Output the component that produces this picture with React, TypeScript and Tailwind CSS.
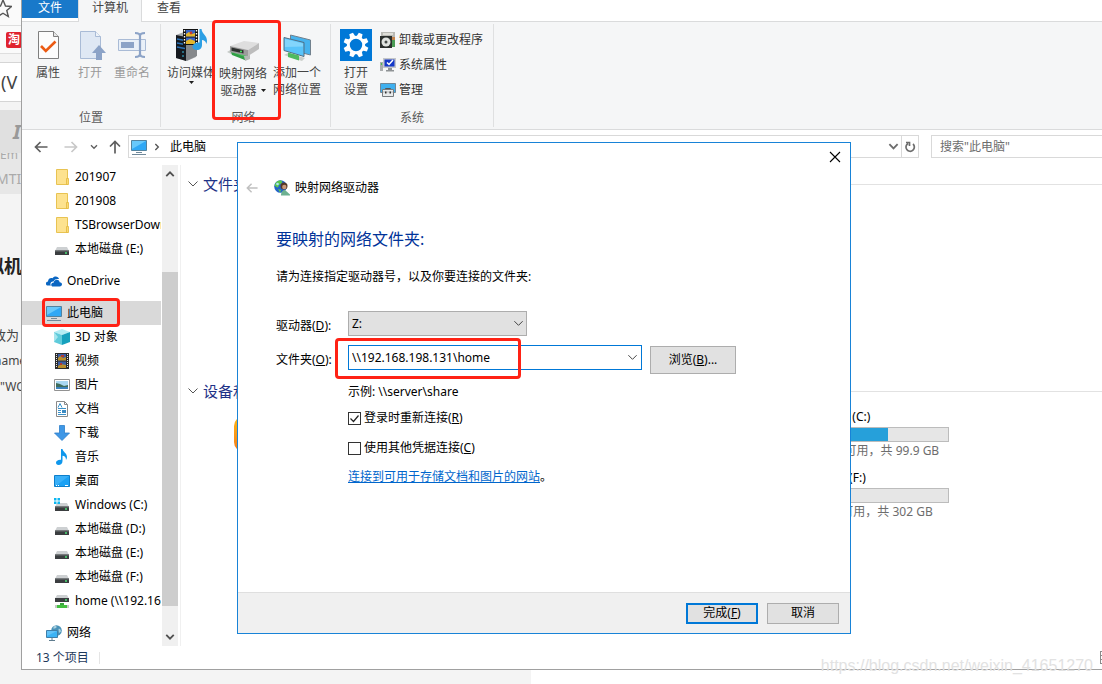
import type { ReactNode } from 'react'

// ---------- small glyphs ----------

function Chevron({ className = '', width = 1 }: { className?: string; width?: number }) {
  return (
    <svg viewBox="0 0 12 12" fill="none" stroke="currentColor" strokeWidth={width} className={className} aria-hidden>
      <path d="M1.5 3.5 6 8l4.5-4.5" />
    </svg>
  )
}

function Arrow({ className = '' }: { className?: string }) {
  return (
    <svg viewBox="0 0 14 14" fill="none" stroke="currentColor" strokeWidth="1.7" className={className} aria-hidden>
      <path d="M13.5 7H1.5M6.5 2 1.5 7l5 5" />
    </svg>
  )
}

function Caret() {
  return (
    <svg viewBox="0 0 5 3" className="h-[3px] w-[5px] fill-[#1e1e1e]" aria-hidden>
      <path d="M0 0h5L2.5 3z" />
    </svg>
  )
}

// ---------- ribbon icons ----------

function PropertiesIcon() {
  return (
    <svg viewBox="0 0 32 32" className="size-8" aria-hidden>
      <path d="M6.500 2.500h15l5 5v22h-20z" fill="#fcfcfc" stroke="#7f7f7f" />
      <path d="M21.5 2.5v5h5" fill="#e6e6e6" stroke="#7f7f7f" />
      <path d="m9 17 4.800 5L23.500 12.500" fill="none" stroke="#eb5a12" strokeWidth="2.600" />
    </svg>
  )
}

function OpenIcon() {
  return (
    <svg viewBox="0 0 32 32" className="size-8" aria-hidden>
      <path d="M6.500 2.500h15l5 5v22h-20z" fill="#dfe8f4" stroke="#a9bbd6" />
      <path d="M21.5 2.5v5h5" fill="#eef3f9" stroke="#a9bbd6" />
      <path d="m25 16 7 8h-4v7h-6v-7h-4z" fill="#8ca3c7" />
    </svg>
  )
}

function RenameIcon() {
  return (
    <svg viewBox="0 0 32 32" className="size-8" aria-hidden>
      <path d="M2.500 10.500h27v11h-27z" fill="#e9f0f8" stroke="#a9bbd6" />
      <path d="M5 13h13v6H5z" fill="#8ca3c7" />
      <path d="M19 4c3 0 5 .8 5 3v18c0 2.200-2 3-5 3M29 4c-3 0-5 .8-5 3v18c0 2.200 2 3 5 3" fill="none" stroke="#8ca3c7" strokeWidth="2.200" />
    </svg>
  )
}

function MediaIcon() {
  return (
    <svg viewBox="0 0 32 32" className="size-8" aria-hidden>
      <path d="m1 6 8-3 12 2v23l-9 4-11-3z" fill="#a5a8ab" />
      <path d="m1 6 10 2v24L1 29z" fill="#15191e" />
      <path d="m11 8 11-3v22l-11 5z" fill="#85888b" />
      <path d="m2 10 8 1.500M2 14l8 1.500M2 18l8 1.500" stroke="#2a72b8" strokeWidth="1.300" />
      <circle cx="8" cy="23" r=".8" fill="#43d6ff" />
      <circle cx="8" cy="27" r=".8" fill="#43d6ff" />
      <path d="M8 0h15v16H8z" fill="#111" />
      <path d="M11 1h9v6.500h-9zM11 8.500h9v6.500h-9z" fill="#3a64c4" />
      <path d="m11 5 3-2 3 2 3-1v3.500h-9zM11 12l4-2 5 2v3h-9z" fill="#e3b62b" />
      <circle cx="16" cy="4" r="1.400" fill="#c93a2b" />
      <path d="M9.500 1v14M21.500 1v14" stroke="#fff" strokeWidth="1.400" strokeDasharray="1.500 1.500" />
      <path d="M24.500 0h2c.5 5 5.500 6 5.500 12 0 1-.2 2-.8 3-.3-3-2.200-4-4.200-4v5c0 3-2 5-5 5s-4.500-1.500-4.500-3.500 3-4.500 7-4z" fill="#2d9fe4" />
    </svg>
  )
}

function MapDriveIcon() {
  return (
    <svg viewBox="0 0 32 32" className="size-8" aria-hidden>
      <path d="m0 22 5-3 6 2-5 4z" fill="#c5cac7" />
      <path d="m4 22 5-2 12 5-3 5z" fill="#51bd63" />
      <path d="m4 22 14 5v3L5 25z" fill="#2f9f45" />
      <path d="m17 26 6-1v4l-5 2z" fill="#b4b9b6" />
      <path d="M3 16 17 11l15 2-11 7z" fill="#dedede" />
      <path d="m3 16 18 4v6L3 22z" fill="#9c9c9c" />
      <path d="m21 20 11-7v6l-11 7z" fill="#bdbdbd" />
      <path d="m4.500 17.500 12 2.700v3.300l-12-2.800z" fill="#2e3230" />
      <circle cx="14" cy="21.500" r="1" fill="#49ef63" />
    </svg>
  )
}

function AddLocationIcon() {
  return (
    <svg viewBox="0 0 32 32" className="size-8" aria-hidden>
      <path d="m9.500 6 20 5v15l-20-5z" fill="#47b3ee" stroke="#71818e" />
      <path d="m3 8.500 20 5v14l-20-6z" fill="#59c4fa" stroke="#526e82" />
      <path d="m4 10 18 4.500v3L4 18z" fill="#82d5fc" />
      <path d="m3 26 4-2 17 5-3 3z" fill="#c9ceca" />
      <path d="m7 23.500 11 3v5L7 28z" fill="#4fba60" />
    </svg>
  )
}

function GearTile() {
  return (
    <svg viewBox="0 0 32 32" className="size-8" aria-hidden>
      <path d="M0 0h32v32H0z" fill="#0078d7" />
      <circle cx="16" cy="16" r="7.700" fill="none" stroke="#fff" strokeWidth="3" />
      {[22, 67, 112, 157, 202, 247, 292, 337].map((deg) => (
        <path key={deg} d="M14 3.500h4l.8 4.500h-5.600z" fill="#fff" transform={`rotate(${deg} 16 16)`} />
      ))}
    </svg>
  )
}

function UninstallIcon() {
  return (
    <svg viewBox="0 0 16 16" className="size-4" aria-hidden>
      <path d="M1 0h14v5H1z" fill="#b9b9b4" />
      <path d="M3 1h10v2H3z" fill="#deded8" />
      <path d="M11 5h4v10h-4z" fill="#c4834d" />
      <path d="M12 8h3v7h-3z" fill="#4b9c56" />
      <path d="M0 4h12v12H0z" fill="#2b2f2d" />
      <circle cx="6" cy="10" r="4.500" fill="#e0e3e0" />
      <circle cx="6" cy="10" r="1.500" fill="#454a48" />
    </svg>
  )
}

function SystemIcon() {
  return (
    <svg viewBox="0 0 16 16" className="size-4" aria-hidden>
      <path d="M0 5h3v9H0z" fill="#a9acae" />
      <path d="M1 6h1v2H1z" fill="#49bf4b" />
      <path d="M3 1h13v10H3z" fill="#c3c6ca" />
      <path d="M4.500 2.500h10v7h-10z" fill="#1438c8" />
      <path d="m7 5.500 2 2L13 3" fill="none" stroke="#fff" strokeWidth="1.500" />
      <path d="M8 11h4v2h2v1.500H6V13h2z" fill="#8f9396" />
    </svg>
  )
}

function ManageIcon() {
  return (
    <svg viewBox="0 0 16 16" className="size-4" aria-hidden>
      <path d="M.5 1.500h15v9H.5z" fill="#3fb0ef" stroke="#6f8798" />
      <path d="M5.500 7.500v-1h5v1" fill="none" stroke="#555" />
      <path d="M2.500 7.500h11v7h-11z" fill="#e9ebec" stroke="#777b7e" />
      <path d="M3 10h10" stroke="#b4b7b9" />
      <path d="M5 9.500h1.500v2H5zM9.500 9.500H11v2H9.500z" fill="#333" />
    </svg>
  )
}

// ---------- tree icons ----------

function FolderIcon() {
  return (
    <svg viewBox="0 0 16 16" className="size-4" aria-hidden>
      <path d="M2.500.5h11v15h-11z" fill="#fde28f" stroke="#e8c352" />
      <path d="M12.500 9.500h2v6h-2z" fill="#fbd974" stroke="#e2b93e" strokeWidth=".8" />
    </svg>
  )
}

function DriveIcon({ children }: { children?: ReactNode }) {
  return (
    <svg viewBox="0 0 16 16" className="size-4" aria-hidden>
      <path d="M3 6h10l2 4H1z" fill="#cdd0d2" />
      <path d="M1 9.500h14V14H1z" fill="#3b3e40" />
      <path d="M1 9.500h14v1H1z" fill="#6b6e70" />
      <circle cx="12" cy="12" r=".9" fill="#4df07c" />
      {children}
    </svg>
  )
}

function WindowsDriveIcon() {
  return (
    <DriveIcon>
      <path d="M0 1h2.500v2.500H0zM3.500 1H6v2.500H3.500zM0 4.500h2.500V7H0zM3.500 4.500H6V7H3.500z" fill="#0cb6f0" />
    </DriveIcon>
  )
}

function NetDriveIcon() {
  return (
    <svg viewBox="0 0 16 16" className="size-4" aria-hidden>
      <path d="M3 2h10l2 3.500H1z" fill="#cdd0d2" />
      <path d="M1 5h14v4H1z" fill="#3b3e40" />
      <circle cx="12" cy="7" r=".9" fill="#4df07c" />
      <path d="M6 10h4v2H6z" fill="#3aa53c" />
      <path d="M3 12h10v3H3z" fill="#43bf3f" />
      <path d="M1 12h2v3H1zM13 12h2v3h-2z" fill="#c4c8c4" />
    </svg>
  )
}

function OneDriveIcon() {
  return (
    <svg viewBox="0 0 16 16" className="size-4" aria-hidden>
      <path d="M2 12.500C-1 12.500-.5 8.500 2 8.500c0-3 3-4 4.500-3.200C8 2.500 12.500 3 13 6 9.500 5.500 8 7 7.500 8.500 5 8 3.500 11 5 12.500z" fill="#0a66c2" />
      <path d="M7 13.500c-2.500 0-2.500-4 .8-4 .2-3.500 5.400-3.500 5.800-.3 3.200 0 3.200 4.300 0 4.300z" fill="#0a66c2" />
    </svg>
  )
}

function PcIcon() {
  return (
    <svg viewBox="0 0 16 16" className="size-4" aria-hidden>
      <path d="M.5 1.500h15v10H.5z" fill="#30a8f5" stroke="#53839f" />
      <path d="M1 2h14L1 10z" fill="#68c9fb" />
      <path d="M5 13.500h6M1 15.500h14" stroke="#71899a" />
    </svg>
  )
}

function CubeIcon() {
  return (
    <svg viewBox="0 0 16 16" className="size-4" aria-hidden>
      <path d="m8 0 8 3-8 3-8-3z" fill="#b4edf4" />
      <path d="m0 3 8 3v10l-8-3z" fill="#5fcbdb" />
      <path d="m16 3-8 3v10l8-3z" fill="#16a1bd" />
      <path d="m0 3 4 5-4 5z" fill="#a5e5ed" />
    </svg>
  )
}

function VideoIcon() {
  return (
    <svg viewBox="0 0 16 16" className="size-4" aria-hidden>
      <path d="M1 0h14v16H1z" fill="#2c2c2c" />
      <path d="M2.500 1v14M13.500 1v14" stroke="#e8e8e8" strokeDasharray="1 1" />
      <path d="M4 1h8v6.500H4zM4 8.500h8V15H4z" fill="#3d5ea5" />
      <path d="m4 5 2-2 3 2 3-1v3.500H4zM4 13l3-2 5 1v3H4z" fill="#b98f2c" />
      <path d="M7 2h3v2H7zM6 10h2v2H6z" fill="#b53a2e" />
    </svg>
  )
}

function PictureIcon() {
  return (
    <svg viewBox="0 0 16 16" className="size-4" aria-hidden>
      <path d="M.5 2.500h15v11H.5z" fill="#fff" stroke="#929292" />
      <path d="M2 4h12v8H2z" fill="#a9d8f2" />
      <path d="m2 6 4 1 4 2 4-1v2H2z" fill="#3f6d5c" />
      <path d="M2 10h12v2H2z" fill="#3c83bd" />
    </svg>
  )
}

function DocIcon() {
  return (
    <svg viewBox="0 0 16 16" className="size-4" aria-hidden>
      <path d="M2.500.5h8l3 3v12h-11z" fill="#fff" stroke="#8a8a8a" />
      <path d="M10.500.5v3h3" fill="none" stroke="#8a8a8a" />
      <path d="m4 6.500 2-4 2 4M4 7.500h8M4 9.500h3M4 11.500h3M4 13.500h8" fill="none" stroke="#3a91c9" />
      <path d="M8 9h4v3H8z" fill="#3b8ac2" />
    </svg>
  )
}

function DownloadIcon() {
  return (
    <svg viewBox="0 0 16 16" className="size-4" aria-hidden>
      <path d="M5.500.5h5V8h5L8 15.500.5 8h5z" fill="#3f97e6" stroke="#2d7fc9" strokeWidth=".8" />
    </svg>
  )
}

function MusicIcon() {
  return (
    <svg viewBox="0 0 16 16" className="size-4" aria-hidden>
      <path d="M7 0h1.500c.5 3 4.500 4 4.500 8 0 1-.3 2-1 3 0-3-1.500-4-3.500-4.200V12c0 2.500-1.700 4-4 4-1.700 0-2.500-1-2.500-2.200C2 12 4 10.500 7 10.800z" fill="#0f97ec" />
    </svg>
  )
}

function DesktopIcon() {
  return (
    <svg viewBox="0 0 16 16" className="size-4" aria-hidden>
      <path d="M.5 2.500h15v11H.5z" fill="#1ba1f4" stroke="#0e7fcb" />
      <path d="M1 3h14L3 12H1z" fill="#3ab0f8" />
      <path d="M2 12.500h1M4 12.500h1M11 12.500h3" stroke="#fff" />
    </svg>
  )
}

function NetworkIcon() {
  return (
    <svg viewBox="0 0 16 16" className="size-4" aria-hidden>
      <circle cx="10.500" cy="5.500" r="5.300" fill="#4a92b8" />
      <path d="M8 1.500c2-1 3 0 2.500 1S8 3.500 7 3.500zM12.500 4c1.500-1 2.500 1 2.500 2.500l-2 1.500z" fill="#a9d0de" />
      <path d="M.5 5.500h11v7H.5z" fill="#3cb3f5" stroke="#3f7ea8" />
      <path d="M1 6h10L1 11z" fill="#62c2f8" />
      <path d="M3 15.500h6M6 13v2" stroke="#5f7c8e" />
    </svg>
  )
}

function GlobeUserIcon() {
  return (
    <svg viewBox="0 0 16 16" className="size-4" aria-hidden>
      <circle cx="6.500" cy="6.500" r="6.300" fill="#2464c8" />
      <path d="M2 2.500C5-.5 9 .5 8 2.500S5 4 4.500 6.500 1.500 6 .4 5.500zM4 9l3 1-1 2.500z" fill="#5cc84b" />
      <circle cx="3.500" cy="4" r="1.300" fill="#aee7f5" />
      <circle cx="10" cy="6" r="3.500" fill="#553827" />
      <circle cx="10.300" cy="7" r="2.200" fill="#c9987a" />
      <path d="M7 15.500c0-4 2-5.500 4-5.500l5 4.500v1z" fill="#6db191" />
    </svg>
  )
}

// ---------- data ----------

type TreeItem = { label: string; icon: ReactNode; top?: boolean; active?: boolean }

const treeGroups: TreeItem[][] = [
  [
    { label: '201907', icon: <FolderIcon /> },
    { label: '201908', icon: <FolderIcon /> },
    { label: 'TSBrowserDownload', icon: <FolderIcon /> },
    { label: '本地磁盘 (E:)', icon: <DriveIcon /> },
  ],
  [{ label: 'OneDrive', icon: <OneDriveIcon />, top: true }],
  [
    { label: '此电脑', icon: <PcIcon />, top: true, active: true },
    { label: '3D 对象', icon: <CubeIcon /> },
    { label: '视频', icon: <VideoIcon /> },
    { label: '图片', icon: <PictureIcon /> },
    { label: '文档', icon: <DocIcon /> },
    { label: '下载', icon: <DownloadIcon /> },
    { label: '音乐', icon: <MusicIcon /> },
    { label: '桌面', icon: <DesktopIcon /> },
    { label: 'Windows (C:)', icon: <WindowsDriveIcon /> },
    { label: '本地磁盘 (D:)', icon: <DriveIcon /> },
    { label: '本地磁盘 (E:)', icon: <DriveIcon /> },
    { label: '本地磁盘 (F:)', icon: <DriveIcon /> },
    { label: 'home (\\\\192.168.198.131)', icon: <NetDriveIcon /> },
  ],
  [{ label: '网络', icon: <NetworkIcon />, top: true }],
]

const drives = [
  { name: 'Windows (C:)', used: 60, info: '39.8 GB 可用，共 99.9 GB' },
  { name: '本地磁盘 (F:)', used: 0, info: '301 GB 可用，共 302 GB' },
]

// ---------- explorer ----------

function BigButton({ icon, lines, caret, disabled, className = '' }: {
  icon: ReactNode
  lines: string[]
  caret?: boolean
  disabled?: boolean
  className?: string
}) {
  return (
    <button disabled={disabled} className={`flex shrink-0 flex-col items-center text-[#444] disabled:text-[#9a9a9a] ${className}`}>
      {icon}
      <span className="mt-[3px] flex flex-col items-center leading-[17px] whitespace-nowrap">
        {lines.map((line, i) => (
          <span key={line} className="flex items-center gap-1">
            {line}
            {caret && i > 0 && <Caret />}
          </span>
        ))}
        {caret && lines.length === 1 && <Caret />}
      </span>
    </button>
  )
}

function RibbonGroup({ title, className, children }: { title: string; className: string; children: ReactNode }) {
  return (
    <section className={`my-0.5 flex shrink-0 flex-col justify-between border-r border-[#dfe0e1] ${className}`}>
      <div className="flex items-start">{children}</div>
      <h2 className="pb-px text-center leading-4 text-[#5a5a5a]">{title}</h2>
    </section>
  )
}

function Ribbon() {
  return (
    <div className="flex h-[108px] shrink-0 border-b border-[#dadbdc] bg-[#f5f6f7]">
      <RibbonGroup title="位置" className="w-[139px]">
        <BigButton icon={<PropertiesIcon />} lines={['属性']} className="mt-[5px] ml-[10px] w-8" />
        <BigButton icon={<OpenIcon />} lines={['打开']} disabled className="mt-[5px] ml-[10px] w-8" />
        <BigButton icon={<RenameIcon />} lines={['重命名']} disabled className="mt-[5px] ml-2 w-9" />
      </RibbonGroup>
      <RibbonGroup title="网络" className="w-[170px] pr-1">
        <BigButton icon={<MediaIcon />} lines={['访问媒体']} caret className="mt-[5px] ml-[6px] w-12" />
        <BigButton icon={<MapDriveIcon />} lines={['映射网络', '驱动器']} caret className="mt-[6px] ml-1 w-12" />
        <BigButton icon={<AddLocationIcon />} lines={['添加一个', '网络位置']} className="mt-[5px] ml-[6px] w-12" />
      </RibbonGroup>
      <RibbonGroup title="系统" className="w-[163px]">
        <BigButton icon={<GearTile />} lines={['打开', '设置']} className="mt-[5px] ml-[9px] w-8" />
        <div className="mt-[3px] ml-2 flex flex-col text-[#333]">
          <button className="flex h-[25px] items-center gap-[3px] whitespace-nowrap"><UninstallIcon />卸载或更改程序</button>
          <button className="flex h-[25px] items-center gap-[3px]"><SystemIcon />系统属性</button>
          <button className="flex h-[25px] items-center gap-[3px]"><ManageIcon />管理</button>
        </div>
      </RibbonGroup>
    </div>
  )
}

function AddressBar() {
  return (
    <div className="flex h-[35px] shrink-0 items-start pt-[5px]">
      <div className="flex h-[23px] w-[106px] shrink-0 items-center pl-3 text-[#5f5f5f]">
        <button aria-label="后退"><Arrow className="size-3.5" /></button>
        <button aria-label="前进" className="ml-4 text-[#c8c8c8]"><Arrow className="size-3.5 rotate-180" /></button>
        <button aria-label="最近的位置" className="ml-3"><Chevron className="size-2" width={2} /></button>
        <button aria-label="上移" className="ml-[10px]"><Arrow className="size-3.5 rotate-90" /></button>
      </div>
      <div className="flex h-[23px] w-[791px] shrink-0 items-center border border-[#d9d9d9]">
        <span className="ml-0.5"><PcIcon /></span>
        <Chevron className="ml-[6px] size-2 -rotate-90 text-[#555]" width={2} />
        <span className="ml-[9px] text-black">此电脑</span>
        <button aria-label="历史记录" className="ml-auto flex w-[16px] justify-center text-[#6d6d6d]">
          <Chevron className="size-[11px]" width={2} />
        </button>
        <button aria-label="刷新" className="flex h-full w-[17px] items-center justify-center border-l border-[#d9d9d9] text-[#6d6d6d]">
          <svg viewBox="0 0 12 12" className="size-3" fill="none" stroke="currentColor" strokeWidth="1.700" aria-hidden>
            <path d="M9 3A4.200 4.200 0 1 1 4 2.500M2 1.500h3.500V5" />
          </svg>
        </button>
      </div>
      <input
        aria-label="搜索"
        placeholder={'搜索"此电脑"'}
        className="ml-3 h-[23px] min-w-0 flex-1 border border-r-0 border-[#d9d9d9] pl-2 text-xs outline-none placeholder:text-[#6d6d6d]"
      />
    </div>
  )
}

function Sidebar() {
  return (
    <aside className="flex w-[159px] shrink-0 border-r border-[#f0f0f0]">
      <nav className="flex w-[139px] flex-col gap-2 overflow-hidden">
        {treeGroups.map((items, g) => (
          <ul key={g}>
            {items.map((item, i) => (
              <li key={i}>
                <button
                  className={`flex h-6 w-full items-center gap-[5px] whitespace-nowrap text-black ${item.top ? 'pl-6' : 'pl-8'} ${item.active ? 'bg-[#d9d9d9]' : ''}`}
                >
                  <span className="shrink-0">{item.icon}</span>
                  {item.label}
                </button>
              </li>
            ))}
          </ul>
        ))}
      </nav>
      <div className="ml-px flex w-4 flex-col items-center bg-[#f0f0f0] text-[#505050]">
        <Chevron className="my-1 size-2.5 rotate-180" width={2.2} />
        <div className="mt-[89px] w-full flex-1 bg-[#cdcdcd]" />
        <Chevron className="mt-[26px] mb-1 size-2.5" width={2.2} />
      </div>
    </aside>
  )
}

function SectionTitle({ children }: { children: ReactNode }) {
  return (
    <h3 className="flex h-5 items-center gap-1 pl-[6px] text-[15px] leading-5 whitespace-nowrap text-[#1e3287]">
      <Chevron className="size-3 text-[#555]" />
      {children}
      <span className="ml-2 h-px flex-1 bg-[#e2e2e2]" />
    </h3>
  )
}

function Explorer() {
  return (
    <div className="absolute top-0 right-0 bottom-[14px] left-[21px] flex flex-col overflow-hidden border-b border-l border-[#a0a0a0] bg-white">
      <div className="flex h-[22px] shrink-0 items-start border-b border-[#dadbdc] leading-4 text-[#444]">
        <button className="h-[18px] w-14 bg-[#1979ca] pb-0.5 text-white">文件</button>
        <button className="-mb-px h-[22px] w-16 border-x border-[#dadbdc] bg-[#f5f6f7] pb-[6px]">计算机</button>
        <button className="h-[18px] w-[54px] pb-0.5">查看</button>
      </div>
      <Ribbon />
      <AddressBar />
      <div className="flex min-h-0 flex-1">
        <Sidebar />
        <main className="flex min-w-0 flex-1 flex-col pt-[9px]">
          <SectionTitle>文件夹 (7)</SectionTitle>
          <div className="mt-[187px]">
            <SectionTitle>设备和驱动器 (6)</SectionTitle>
          </div>
          <div className="flex pt-[7px] pl-[53px]">
            <div className="mt-2 h-9 w-12 shrink-0 rounded-[10px] bg-linear-to-b from-[#fdb713] to-[#f37a1a]" />
            <div className="ml-[516px] flex w-[151px] shrink-0 flex-col gap-[9px]">
              {drives.map((d) => (
                <div key={d.name} className="whitespace-nowrap">
                  <p className="pb-px leading-[18px] text-black">{d.name}</p>
                  <div className="h-[15px] border border-[#bcbcbc] bg-[#e6e6e6]">
                    <div className="h-full bg-[#26a0da]" style={{ width: `${d.used}%` }} />
                  </div>
                  <p className="leading-[18px] text-[#6d6d6d]">{d.info}</p>
                </div>
              ))}
            </div>
          </div>
        </main>
      </div>
      <footer className="flex h-[23px] shrink-0 items-center pl-[14px] text-[#1e395b]">
        13 个项目
        <span className="ml-[10px] h-3 w-px bg-[#e5e5e5]" />
        <svg viewBox="0 0 2 13" className="ml-auto h-[13px] w-0.5" stroke="#8a8a8a" fill="none" aria-hidden>
          <path d="M.5 0v13M0 .5h2M0 4.500h2M0 8.500h2M0 12.500h2" />
        </svg>
      </footer>
    </div>
  )
}

// ---------- wizard dialog ----------

function CheckRow({ id, checked, children }: { id: string; checked?: boolean; children: ReactNode }) {
  return (
    <div className="flex h-[30px] items-center gap-[3px]">
      <span className="relative flex size-[13px]">
        <input id={id} type="checkbox" defaultChecked={checked} className="peer size-[13px] appearance-none border border-[#333] bg-white" />
        <svg viewBox="0 0 13 13" fill="none" stroke="#222" strokeWidth="1.200" className="pointer-events-none absolute inset-0 hidden peer-checked:block" aria-hidden>
          <path d="m2.500 6.500 3 3 5-6" />
        </svg>
      </span>
      <label htmlFor={id}>{children}</label>
    </div>
  )
}

function MapDriveDialog() {
  return (
    <div role="dialog" aria-labelledby="wizard-title" className="absolute top-[142px] left-[237px] flex min-h-[492px] w-[614px] flex-col border border-[#1883d7] bg-white text-black">
      <div className="flex justify-end pt-2 pr-[9px]">
        <button aria-label="关闭">
          <svg viewBox="0 0 12 12" className="size-3" stroke="#000" strokeWidth="1.100" aria-hidden>
            <path d="m1 1 10 10M11 1 1 11" />
          </svg>
        </button>
      </div>
      <header className="mt-4 flex h-[18px] items-center pl-2">
        <button aria-label="上一步" disabled className="text-[#c0c0c0]"><Arrow className="size-3" /></button>
        <span className="ml-4"><GlobeUserIcon /></span>
        <span id="wizard-title" className="ml-[5px]">映射网络驱动器</span>
      </header>

      <div className="flex flex-1 flex-col px-[38px] pt-[30px]">
        <h1 className="text-base leading-6 text-[#003399]">要映射的网络文件夹:</h1>
        <p className="mt-[18px] leading-4">请为连接指定驱动器号，以及你要连接的文件夹:</p>

        <div className="mt-[26px] flex h-[25px] items-center">
          <label htmlFor="drive" className="w-[72px] pt-1">驱动器(<u>D</u>):</label>
          <span className="relative">
            <select id="drive" defaultValue="Z:" className="block h-[25px] w-[179px] appearance-none border border-[#adadad] bg-[#e1e1e1] pl-[3px] text-xs">
              <option>Z:</option>
              <option>Y:</option>
            </select>
            <Chevron className="pointer-events-none absolute top-[7px] right-[3px] size-[11px] text-[#333]" />
          </span>
        </div>

        <div className="mt-[9px] flex items-start">
          <label htmlFor="folder" className="w-[72px] pt-[7px] leading-4">文件夹(<u>O</u>):</label>
          <div className="flex h-[25px] w-[294px] items-center border border-[#0078d7] bg-white pr-[3px]">
            <input id="folder" defaultValue={'\\\\192.168.198.131\\home'} className="h-full min-w-0 flex-1 bg-transparent pl-[3px] text-xs outline-none" />
            <button aria-label="展开" className="text-[#333]"><Chevron className="size-[11px]" /></button>
          </div>
          <button className="mt-px ml-2 h-7 w-[86px] border border-[#adadad] bg-[#e1e1e1]">浏览(<u>B</u>)...</button>
        </div>

        <div className="mt-[9px] pl-[72px]">
          <p className="leading-[18px]">示例: \\server\share</p>
          <div className="mt-[2px]">
            <CheckRow id="reconnect" checked>登录时重新连接(<u>R</u>)</CheckRow>
            <CheckRow id="other-user">使用其他凭据连接(<u>C</u>)</CheckRow>
          </div>
          <p className="mt-[5px] leading-[18px]">
            <a href="#storage" className="text-[#0066cc] underline">连接到可用于存储文档和图片的网站</a>。
          </p>
        </div>
      </div>

      <footer className="flex h-[41px] items-center justify-end gap-[9px] border-t border-[#dfdfdf] bg-[#f0f0f0] pr-[11px]">
        <button className="h-[21px] w-[72px] border-2 border-[#0078d7] bg-[#e1e1e1] leading-4">完成(<u>F</u>)</button>
        <button className="h-[21px] w-[72px] border border-[#adadad] bg-[#e1e1e1] leading-4">取消</button>
      </footer>
    </div>
  )
}

// Browser page that peeks out on the left and under the explorer window
function BackgroundPage() {
  return (
    <div className="h-full w-[531px] overflow-hidden bg-[#f4f4f4] whitespace-nowrap text-[#444]">
      <div className="h-[26px] border-b border-[#dedede] bg-[#fafafa]">
        <svg viewBox="0 0 18 18" className="-ml-[6px] size-[18px]" fill="none" stroke="#555" strokeWidth="1.400" aria-hidden>
          <path d="m9 0 2.500 6 6 .5-4.700 4 1.500 6L9 13.200 3.700 16.500l1.500-6-4.700-4 6-.5z" />
        </svg>
      </div>
      <div className="flex h-7 items-center border-b border-[#dedede] bg-[#fafafa] pl-[6px]">
        <span className="flex size-4 items-center justify-center rounded-xs bg-[#e0232e] font-bold text-white">淘</span>
      </div>
      <div className="mt-2 flex h-10 items-center border-y border-[#d5d5d5] bg-white pl-px text-lg">(V</div>
      <div className="mt-2 h-[43px] bg-[#e0e0e0] pt-2 pl-[13px] text-xl font-bold text-[#999] italic">I</div>
      <div className="h-[41px] bg-[#e7e7e7] text-[#aaa]">
        <div className="flex h-2 items-end overflow-hidden leading-3">Em</div>
        <div className="-ml-1 text-sm leading-9">MTI</div>
      </div>
      <h4 className="mt-[58px] -ml-8 text-lg font-bold text-[#222]">虚拟机</h4>
      <div className="-ml-5 pt-[42px] text-[13px] leading-[26px]">
        <p>修改为</p>
        <p className="pl-[14px] text-xs leading-[26px]">name</p>
        <p className="pl-5 text-xs leading-[26px]">"WO</p>
      </div>
    </div>
  )
}

export default function App() {
  return (
    <div className="relative h-screen overflow-hidden bg-white font-['Noto_Sans','Noto_Sans_CJK_SC',sans-serif] text-xs">
      <BackgroundPage />
      <Explorer />
      <MapDriveDialog />

      {/* red callouts */}
      <div className="pointer-events-none absolute top-5 left-[212px] h-[100px] w-[69px] rounded-sm border-3 border-[#ff2215]" />
      <div className="pointer-events-none absolute top-[298px] left-[42px] h-[29px] w-[78px] rounded-sm border-3 border-[#ff2215]" />
      <div className="pointer-events-none absolute top-[338px] left-[335px] h-[41px] w-[186px] rounded-sm border-3 border-[#ff2215]" />

      <p className="pointer-events-none absolute right-[9px] bottom-2 font-['Liberation_Sans',sans-serif] text-base leading-5 text-[#e2e2e2]">
        https://blog.csdn.net/weixin_41651270
      </p>
    </div>
  )
}
